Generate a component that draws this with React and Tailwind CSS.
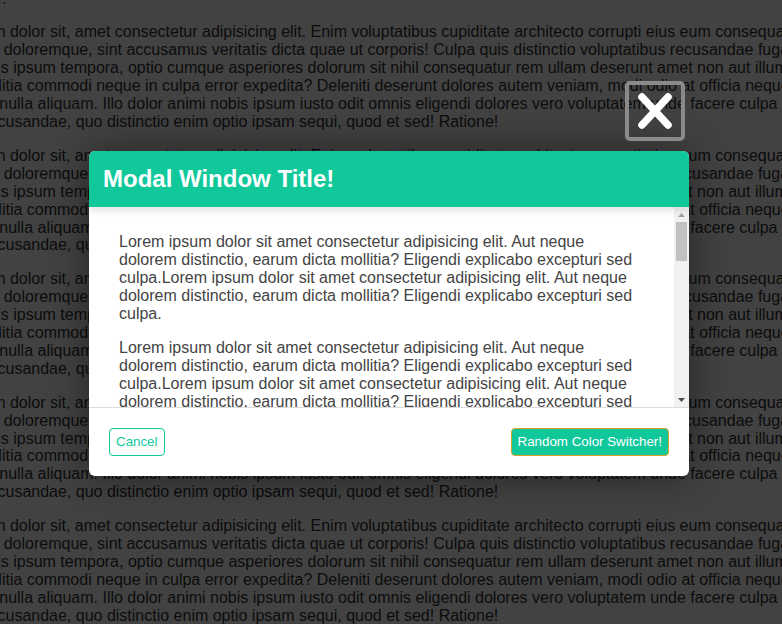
import React from "react";

const bgLines = [
  "Lorem ipsum dolor sit, amet consectetur adipisicing elit. Enim voluptatibus cupiditate architecto corrupti eius eum consequatur, quas",
  "Ipsam quasi doloremque, sint accusamus veritatis dicta quae ut corporis! Culpa quis distinctio voluptatibus recusandae fuga, quasi",
  "Nemo, officiis ipsum tempora, optio cumque asperiores dolorum sit nihil consequatur rem ullam deserunt amet non aut illum, nemo",
  "Dolores mollitia commodi neque in culpa error expedita? Deleniti deserunt dolores autem veniam, modi odio at officia neque, sint",
  "Quibusdam nulla aliquam. Illo dolor animi nobis ipsum iusto odit omnis eligendi dolores vero voluptatem unde facere culpa explicabo",
  "Aperiam Recusandae, quo distinctio enim optio ipsam sequi, quod et sed! Ratione!",
];

const firstLines = [...bgLines.slice(0, 5), "Lorem, dolor."];

const modalText =
  "Lorem ipsum dolor sit amet consectetur adipisicing elit. Aut neque dolorem distinctio, earum dicta mollitia? Eligendi explicabo excepturi sed culpa.Lorem ipsum dolor sit amet consectetur adipisicing elit. Aut neque dolorem distinctio, earum dicta mollitia? Eligendi explicabo excepturi sed culpa.";

function BgParagraph({ lines = bgLines }) {
  return (
    <div className="my-4 leading-[17.9px] whitespace-nowrap">
      {lines.map((l, i) => (
        <div key={i}>{l}</div>
      ))}
    </div>
  );
}

function Triangle({ up, color }) {
  return (
    <svg width="7" height="4" viewBox="0 0 7 4">
      <path d={up ? "M0 4 L3.5 0 L7 4 Z" : "M0 0 L7 0 L3.5 4 Z"} fill={color} />
    </svg>
  );
}

export default function App() {
  return (
    <div className="relative h-[624px] w-[782px] overflow-hidden bg-white font-['Liberation_Sans',Arial,sans-serif] text-[16px] text-[#333]">
      <div className="flex justify-center">
        <div className="w-[956px] shrink-0 -mt-[116px]">
          <BgParagraph lines={firstLines} />
          <BgParagraph />
          <BgParagraph />
          <BgParagraph />
          <BgParagraph />
          <BgParagraph />
          <BgParagraph />
        </div>
      </div>

      <div className="absolute inset-0 bg-[rgba(0,0,0,0.74)] flex justify-center items-start pt-[151px] pr-[4px]">
        <div className="relative w-[600px]">
          <button className="absolute -top-[70px] right-[4px] w-[60px] h-[60px] rounded-[5px] border-[4px] border-[#8a8a8a] flex items-center justify-center">
            <svg width="40" height="40" viewBox="0 0 40 40">
              <path d="M7 6 L33 34 M33 6 L7 34" stroke="white" strokeWidth="7.5" strokeLinecap="round" fill="none" />
            </svg>
          </button>

          <div className="rounded-[6px] overflow-hidden bg-white shadow-[0_0_40px_rgba(0,0,0,0.45)]">
            <div className="relative z-10 h-[56px] bg-[#11c89b] flex items-center px-[14px] shadow-[0_3px_8px_rgba(0,0,0,0.12)]">
              <h2 className="text-white font-bold text-[24px] leading-none">Modal Window Title!</h2>
            </div>
            <div className="h-[200px] flex">
              <div className="flex-1 overflow-hidden pt-[10px] pl-[30px] pr-[35px] text-[#444] leading-[18px]">
                {Array.from({ length: 8 }).map((_, i) => (
                  <p key={i} className="my-4">{modalText}</p>
                ))}
              </div>
              <div className="w-[15px] bg-[#f1f1f1] flex flex-col">
                <div className="h-[15px] flex items-center justify-center">
                  <Triangle up color="#a3a3a3" />
                </div>
                <div className="mx-[2px] h-[39px] bg-[#c1c1c1]" />
                <div className="flex-1" />
                <div className="h-[15px] flex items-center justify-center">
                  <Triangle color="#505050" />
                </div>
              </div>
            </div>
            <div className="h-[69px] border-t border-[#dcdcdc] flex items-center justify-between px-[20px]">
              <button className="h-[28px] px-[6px] rounded-[4px] border border-[#11c89b] text-[#11c89b] bg-white text-[13.33px] leading-none">
                Cancel
              </button>
              <button className="h-[28px] px-[6px] rounded-[4px] border border-[#d9a12a] text-white bg-[#11c89b] text-[13.33px] leading-none">
                Random Color Switcher!
              </button>
            </div>
          </div>
        </div>
      </div>
    </div>
  );
}
